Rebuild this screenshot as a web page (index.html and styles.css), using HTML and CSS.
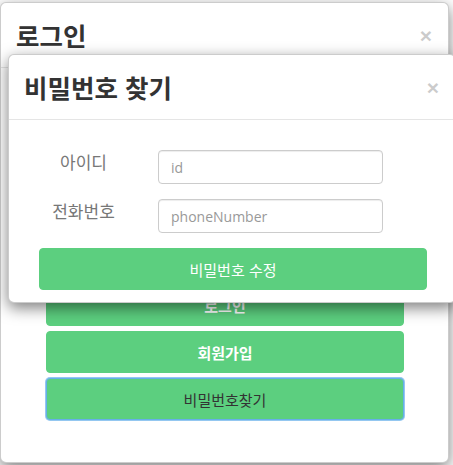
FILE: index.html
```html
<!DOCTYPE html>
<html lang="ko">
<head>
<meta charset="utf-8">
<title>로그인</title>
<link rel="stylesheet" href="styles.css">
</head>
<body>
<div class="modal login">
  <div class="modal-header">
    <h4 class="modal-title">로그인</h4>
    <button class="close" type="button">×</button>
  </div>
  <div class="modal-body login-body">
    <div class="btn-stack">
      <button class="btn btn-bold" type="button">로그인</button>
      <button class="btn btn-bold" type="button">회원가입</button>
      <button class="btn btn-focus" type="button">비밀번호찾기</button>
    </div>
  </div>
</div>

<div class="modal find">
  <div class="modal-header">
    <h4 class="modal-title">비밀번호 찾기</h4>
    <button class="close" type="button">×</button>
  </div>
  <div class="modal-body find-body">
    <div class="row">
      <label class="label">아이디</label>
      <input class="input" type="text" placeholder="id">
    </div>
    <div class="row">
      <label class="label">전화번호</label>
      <input class="input" type="text" placeholder="phoneNumber">
    </div>
    <button class="btn btn-wide" type="button">비밀번호 수정</button>
  </div>
</div>
</body>
</html>
```

FILE: styles.css
```css
html, body {
  margin: 0;
  padding: 0;
  overflow: hidden;
}
body {
  width: 453px;
  height: 465px;
  background: #ffffff;
  font-family: "Open Sans", "Noto Sans CJK KR", sans-serif;
  color: #333333;
  position: relative;
}

.modal {
  background: #ffffff;
  border: 1px solid rgba(0, 0, 0, 0.2);
  border-radius: 6px;
  box-shadow: 0 5px 15px rgba(0, 0, 0, 0.5);
  box-sizing: border-box;
}

.login {
  margin-top: 2px;
  width: 449px;
  height: 461px;
  display: flex;
  flex-direction: column;
}

.find {
  position: absolute;
  left: 8px;
  top: 54px;
  width: 448px;
}

.modal-header {
  display: flex;
  justify-content: space-between;
  align-items: center;
  padding: 15px;
  border-bottom: 1px solid #e5e5e5;
}

.modal-title {
  margin: 0;
  font-family: "Noto Sans CJK KR", sans-serif;
  font-size: 25.5px;
  font-weight: 700;
  line-height: 34px;
  color: #333333;
}

.close {
  border: 0;
  background: transparent;
  padding: 0;
  font-family: "Liberation Sans", sans-serif;
  font-size: 21px;
  font-weight: 700;
  line-height: 1;
  color: #000000;
  opacity: 0.2;
  margin-right: 1px;
}

.login-body {
  flex: 1;
  display: flex;
  flex-direction: column;
  justify-content: flex-end;
  padding: 0 44px 42px 45px;
}

.btn-stack {
  display: flex;
  flex-direction: column;
  gap: 5px;
}

.find-body {
  display: flex;
  flex-direction: column;
  gap: 15px;
  padding: 30px 28px 12px 30px;
}

.row {
  display: flex;
  align-items: flex-start;
  gap: 30px;
}

.label {
  width: 89px;
  flex: none;
  text-align: center;
  font-family: "Noto Sans CJK KR", sans-serif;
  font-size: 17px;
  line-height: 22px;
  padding-top: 1px;
  color: #777777;
}

.input {
  width: 225px;
  height: 34px;
  box-sizing: border-box;
  border: 1px solid #cccccc;
  border-radius: 4px;
  padding: 0 12px;
  font-family: "Open Sans", "Noto Sans CJK KR", sans-serif;
  font-size: 14px;
  color: #555555;
  background: #ffffff;
  box-shadow: inset 0 1px 1px rgba(0, 0, 0, 0.075);
}
.input::placeholder {
  color: #999999;
}

.btn {
  height: 42px;
  border: 1px solid #5ccf7f;
  border-radius: 4px;
  background: #5ccf7f;
  color: #ffffff;
  font-family: "Noto Sans CJK KR", sans-serif;
  font-size: 15px;
  padding: 0;
}

.btn-bold {
  font-weight: 700;
}

.btn-focus {
  color: #333333;
  border: 1px solid #66afe9;
  box-shadow: 0 0 0 1px rgba(102, 175, 233, 0.7);
}

.btn-wide {
  width: 100%;
}
```
